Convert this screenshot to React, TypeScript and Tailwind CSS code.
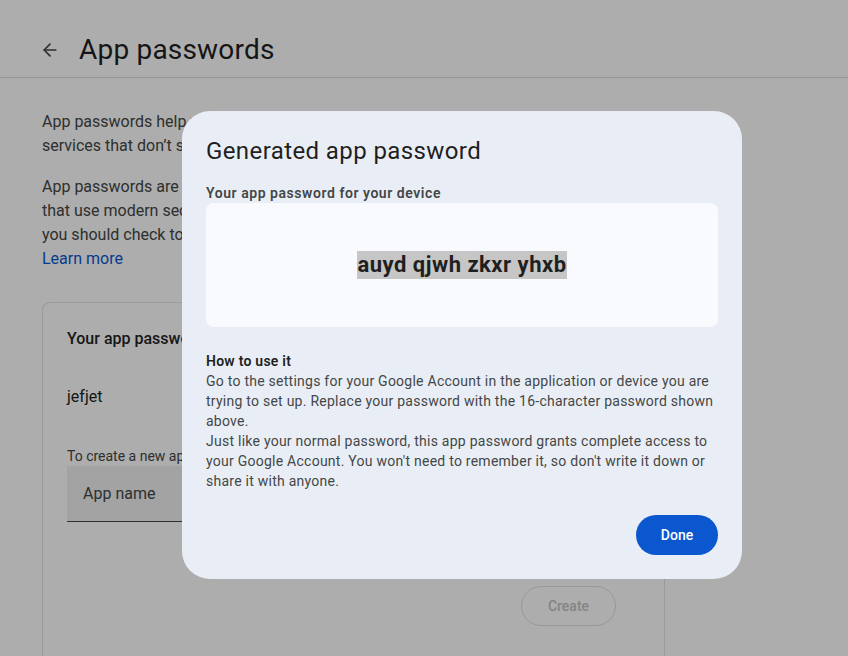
import { ArrowLeft } from 'lucide-react'

const sans = { fontFamily: 'Roboto, "Noto Sans", Arial, sans-serif' }

function Page() {
  return (
    <div className="min-h-[656px] bg-white text-[#1f1f1f]" style={sans}>
      <header className="flex h-[78px] items-center gap-[19px] border-b border-[#dadce0] px-[40px] pt-[22px]">
        <ArrowLeft className="h-[20px] w-[20px] text-[#444746]" strokeWidth={2} />
        <h1 className="text-[28px] leading-[36px] tracking-[0.2px] text-[#1f1f1f]">App passwords</h1>
      </header>

      <main className="w-[665px] pl-[42px] pt-[32px]">
        <p className="text-[16px] leading-[24px] text-[#444746]">
          App passwords help you sign into your Google Account on older apps and
          <br />
          services that don’t support modern security standards.
        </p>
        <p className="mt-[17px] text-[16px] leading-[24px] text-[#444746]">
          App passwords are less secure than using up-to-date apps and services
          <br />
          that use modern security standards. Before you create an app password,
          <br />
          you should check to see if your app needs this in order to sign in.
        </p>
        <a className="block text-[16px] leading-[24px] text-[#0b57d0]">Learn more</a>

        <section className="mt-[31px] h-[400px] rounded-t-[8px] border border-b-0 border-[#e3e3e3] px-[24px] pt-[24px]">
          <h2 className="text-[16px] font-medium leading-[24px]">Your app passwords</h2>
          <div className="mt-[34px] text-[16px] leading-[24px]">jefjet</div>
          <p className="mt-[37px] text-[14px] leading-[20px] text-[#444746]">
            To create a new app specific password, type a name for it below...
          </p>
          <div className="flex h-[56px] items-center border-b border-[#444746] bg-[#f0f0f0] px-[16px]">
            <span className="text-[16px] text-[#444746]">App name</span>
          </div>
          <div className="mt-[64px] flex justify-end pr-[24px]">
            <button className="h-[40px] w-[95px] rounded-full border border-[#e0e0e0] text-[14px] font-medium text-[#c4c4c4]">
              Create
            </button>
          </div>
        </section>
      </main>
    </div>
  )
}

export default function App() {
  return (
    <div className="relative h-[656px] w-[848px] overflow-hidden">
      <Page />
      <div className="absolute inset-0 bg-[rgba(0,0,0,0.32)]" />
      <div
        className="absolute left-[182px] top-[111px] flex w-[560px] flex-col rounded-[28px] bg-[#e9eef6] p-[24px] text-[#1f1f1f]"
        style={sans}
      >
        <h2 className="text-[24px] leading-[32px] tracking-[0.4px]">Generated app password</h2>
        <div className="mt-[16px] text-[14px] font-semibold leading-[20px] tracking-[0.55px] text-[#444746]">
          Your app password for your device
        </div>
        <div className="flex h-[124px] items-center justify-center rounded-[8px] bg-[#f8fafd]">
          <span className="bg-[#c6c6c6] text-[22px] font-bold leading-[28px] tracking-[0.5px] text-[#1f1f1f]">
            auyd qjwh zkxr yhxb
          </span>
        </div>
        <div className="mt-[24px] text-[14px] leading-[20px] tracking-[0.25px] text-[#444746]">
          <div className="font-semibold text-[#1f1f1f]">How to use it</div>
          <div>
            Go to the settings for your Google Account in the application or device you are
            <br />
            trying to set up. Replace your password with the 16-character password shown
            <br />
            above.
          </div>
          <div>
            Just like your normal password, this app password grants complete access to
            <br />
            your Google Account. You won't need to remember it, so don't write it down or
            <br />
            share it with anyone.
          </div>
        </div>
        <div className="mt-[24px] flex justify-end">
          <button className="h-[40px] w-[82px] rounded-full bg-[#0b57d0] text-[14px] font-medium text-white">
            Done
          </button>
        </div>
      </div>
    </div>
  )
}
